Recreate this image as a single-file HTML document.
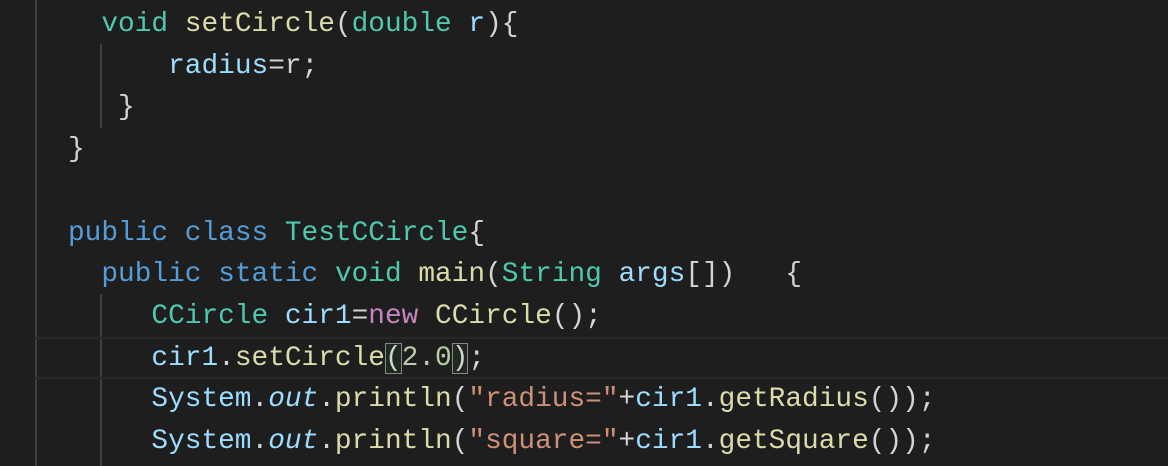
<!DOCTYPE html>
<html><head><style>
html,body{margin:0;padding:0;background:#1e1e1e;width:1168px;height:466px;overflow:hidden;position:relative}
.code{position:absolute;left:68px;top:4px;font-family:"Liberation Mono",monospace;font-size:27.8px;line-height:41.7px;color:#d4d4d4;white-space:pre}
.k{color:#569cd6}.t{color:#4ec9b0}.f{color:#dcdcaa}.v{color:#9cdcfe}.n{color:#c586c0}.s{color:#ce9178}.num{color:#b5cea8}
i{font-style:italic}
.b{outline:1.5px solid #888;outline-offset:-1px;background:#1f2a1f}
.g{position:absolute;width:2px;background:#404040}
.hl{position:absolute;left:35px;right:0;top:337px;height:38px;border-top:2px solid #282828;border-bottom:2px solid #282828}
</style></head><body>
<div class="g" style="left:35px;top:0;height:466px"></div>
<div class="g" style="left:100px;top:44px;height:84px"></div>
<div class="g" style="left:100px;top:294px;height:172px"></div>
<div class="hl"></div>
<div class="code">  <span class="t">void</span> <span class="f">setCircle</span>(<span class="t">double</span> <span class="v">r</span>){
      <span class="v">radius</span>=r;
   }
}

<span class="k">public</span> <span class="k">class</span> <span class="t">TestCCircle</span>{
  <span class="k">public</span> <span class="k">static</span> <span class="t">void</span> <span class="f">main</span>(<span class="t">String</span> <span class="v">args</span>[])   {
     <span class="t">CCircle</span> <span class="v">cir1</span>=<span class="n">new</span> <span class="f">CCircle</span>();
     <span class="v">cir1</span>.<span class="f">setCircle</span><span class="b">(</span><span class="num">2.0</span><span class="b">)</span>;
     <span class="v">System</span>.<i class="v">out</i>.<span class="f">println</span>(<span class="s">"radius="</span>+<span class="v">cir1</span>.<span class="f">getRadius</span>());
     <span class="v">System</span>.<i class="v">out</i>.<span class="f">println</span>(<span class="s">"square="</span>+<span class="v">cir1</span>.<span class="f">getSquare</span>());</div>
</body></html>
